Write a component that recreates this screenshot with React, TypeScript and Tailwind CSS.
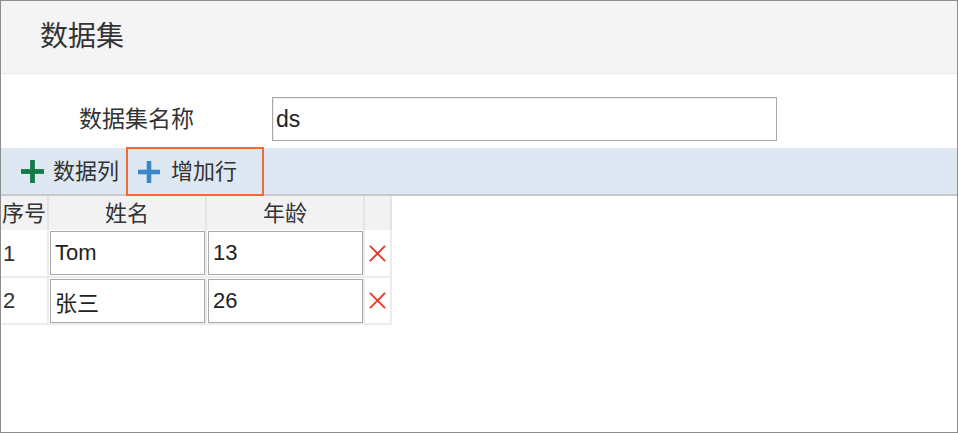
import React, { useState } from 'react';

interface Row {
  id: number;
  name: string;
  age: string;
}

const font = "font-['Liberation_Sans','Noto_Sans_CJK_SC',sans-serif]";

const PlusIcon: React.FC<{ className?: string }> = ({ className }) => (
  <svg viewBox="0 0 24 24" className={className}>
    <rect x="0" y="9.5" width="24" height="5" fill="currentColor" />
    <rect x="9.5" y="0" width="5" height="24" fill="currentColor" />
  </svg>
);

const CrossIcon: React.FC<{ className?: string }> = ({ className }) => (
  <svg viewBox="0 0 20 20" className={className}>
    <path d="M2 2 L18 18 M18 2 L2 18" stroke="currentColor" strokeWidth="2" fill="none" />
  </svg>
);

const App: React.FC = () => {
  const [name, setName] = useState('ds');
  const [rows, setRows] = useState<Row[]>([
    { id: 1, name: 'Tom', age: '13' },
    { id: 2, name: '张三', age: '26' },
  ]);

  const updateRow = (id: number, key: 'name' | 'age', value: string) => {
    setRows(rows.map((r) => (r.id === id ? { ...r, [key]: value } : r)));
  };

  return (
    <div className={`w-[958px] h-[433px] bg-white border border-[#8c8c8c] flex flex-col text-[#333] ${font}`}>
      <div className="h-[73px] shrink-0 bg-[#f4f4f4] border-b border-[#e9e9e9] flex items-center pl-[39px]">
        <h1 className="text-[28px] leading-none text-[#333]">数据集</h1>
      </div>

      <div className="h-[74px] shrink-0 flex items-end pb-[7px]">
        <label className="w-[271px] pl-[78px] text-[23px] leading-[44px] text-[#333]">数据集名称</label>
        <input
          type="text"
          value={name}
          onChange={(e) => setName(e.target.value)}
          className="w-[505px] h-[44px] border border-[#a9a9a9] px-[3px] text-[23px] text-[#222] outline-none shadow-[inset_1px_1px_1px_rgba(0,0,0,0.08)]"
        />
      </div>

      <div className="h-[48px] shrink-0 bg-[#dde8f2] border-b-2 border-[#c8c8c8] flex items-stretch pl-[20px]">
        <button className="flex items-center gap-[9px] pr-[7px] text-[22px] text-[#333]">
          <PlusIcon className="w-[23px] h-[23px] text-[#147a47]" />
          数据列
        </button>
        <button className="flex items-center gap-[11px] pl-[12px] pr-[27px] -mt-px h-[49px] shadow-[inset_0_0_0_2px_#f26a2e] text-[22px] text-[#333]">
          <PlusIcon className="w-[22px] h-[22px] text-[#3d87c9]" />
          增加行
        </button>
      </div>

      <table className="border-collapse w-[391px] text-[22px]">
        <thead>
          <tr className="h-[34px] bg-[#f2f2f2]">
            <th className="w-[47px] font-normal border-r-2 border-[#e4e4e4] text-left pl-[1px]">序号</th>
            <th className="w-[157px] font-normal border-r-2 border-[#e4e4e4]">姓名</th>
            <th className="w-[157px] font-normal border-r-2 border-[#e4e4e4]">年龄</th>
            <th className="font-normal border-r-2 border-[#e4e4e4]"></th>
          </tr>
        </thead>
        <tbody>
          {rows.map((r) => (
            <tr key={r.id} className="h-[47px] border-b-2 border-[#ececec]">
              <td className="pl-[2px] border-r-2 border-[#ececec]">{r.id}</td>
              <td className="p-0 border-r-2 border-[#ececec] pl-[1px]">
                <input
                  value={r.name}
                  onChange={(e) => updateRow(r.id, 'name', e.target.value)}
                  className="w-[155px] h-[44px] border border-[#a9a9a9] px-[4px] text-[22px] text-[#222] outline-none"
                />
              </td>
              <td className="p-0 border-r-2 border-[#ececec] pl-[1px]">
                <input
                  value={r.age}
                  onChange={(e) => updateRow(r.id, 'age', e.target.value)}
                  className="w-[155px] h-[44px] border border-[#a9a9a9] px-[4px] text-[22px] text-[#222] outline-none"
                />
              </td>
              <td className="border-r-2 border-[#ececec]">
                <button
                  onClick={() => setRows(rows.filter((x) => x.id !== r.id))}
                  className="flex items-center justify-center w-full"
                >
                  <CrossIcon className="w-[19px] h-[19px] text-[#e8392c]" />
                </button>
              </td>
            </tr>
          ))}
        </tbody>
      </table>
    </div>
  );
};

export default App;
